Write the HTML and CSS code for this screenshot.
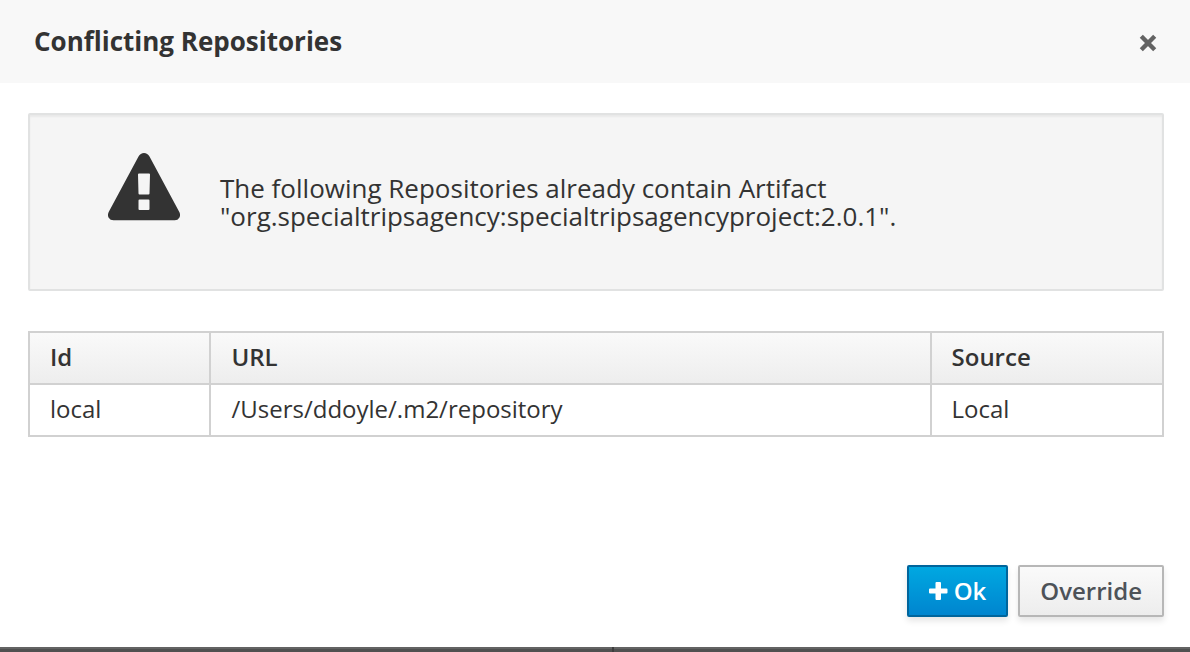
FILE: index.html
```html
<!DOCTYPE html>
<html lang="en">
<head>
<meta charset="utf-8">
<title>Conflicting Repositories</title>
<link rel="stylesheet" href="styles.css">
</head>
<body>
<section class="modal" role="dialog" aria-labelledby="modal-title">
  <header class="modal-header">
    <h1 class="modal-title" id="modal-title">Conflicting Repositories</h1>
    <button class="close" type="button" aria-label="Close">
      <svg class="close-icon" viewBox="0 0 18 18" aria-hidden="true"><path d="M2.300 3.300 15.700 16.700M15.700 3.300 2.300 16.700"/></svg>
    </button>
  </header>
  <main class="modal-body">
    <div class="well">
      <svg class="warning-icon" viewBox="0 0 72 68" aria-hidden="true">
        <path fill-rule="evenodd" d="M30.500 3.500Q32.500 0 36 0T41.500 3.500L71.300 59Q72.800 62 71.300 64.700T66.500 67.300H5.500Q2.200 67.300.7 64.700T.700 59ZM31 20.500Q30 20.500 30 21.500L30.500 40.500Q30.600 41.500 31.500 41.500H40.500Q41.500 41.500 41.500 40.500L42 21.500Q42 20.500 41 20.500ZM31.500 46.500Q30.500 46.500 30.500 47.500V56Q30.500 57 31.500 57H40.500Q41.500 57 41.500 56V47.500Q41.500 46.500 40.500 46.500Z"/>
      </svg>
      <p class="message">The following Repositories already contain Artifact<br>"org.specialtripsagency:specialtripsagencyproject:2.0.1".</p>
    </div>
    <table class="repositories">
      <colgroup><col class="col-id"><col class="col-url"><col class="col-source"></colgroup>
      <thead><tr><th scope="col">Id</th><th scope="col">URL</th><th scope="col">Source</th></tr></thead>
      <tbody><tr><td>local</td><td>/Users/ddoyle/.m2/repository</td><td>Local</td></tr></tbody>
    </table>
  </main>
  <footer class="modal-footer">
    <button class="btn btn-primary" type="button">
      <svg class="plus-icon" viewBox="0 0 19 18" aria-hidden="true"><path d="M7.500 0H11Q12 0 12 1V6.500H17.500Q18.500 6.500 18.500 7.500V10.500Q18.500 11.500 17.500 11.500H12V17Q12 18 11 18H7.500Q6.500 18 6.500 17V11.500H1Q0 11.500 0 10.500V7.500Q0 6.500 1 6.500H6.500V1Q6.500 0 7.500 0Z"/></svg>Ok</button>
    <button class="btn btn-default" type="button">Override</button>
  </footer>
</section>
<div class="page-behind"><span class="pane"></span><span class="pane"></span></div>
</body>
</html>
```
FILE: styles.css
```css
* {
  box-sizing: border-box;
}

body {
  margin: 0;
  min-height: 100vh;
  display: flex;
  flex-direction: column;
  background: #fff;
  color: #333;
  font-family: "Open Sans", "Noto Sans", sans-serif;
  font-size: 24px;
}

.modal {
  flex: 1;
  display: flex;
  flex-direction: column;
}

.modal-header {
  display: flex;
  align-items: center;
  justify-content: space-between;
  padding: 19px 33px 20px 34px;
  background: #f8f8f8;
}

.modal-title {
  margin: 0;
  font-size: 26px;
  line-height: 44px;
  font-weight: 700;
}

.close {
  display: flex;
  padding: 2px 0 0;
  border: 0;
  background: none;
}

.close-icon {
  width: 18px;
  height: 18px;
  overflow: visible;
  stroke: #636363;
  stroke-width: 4.4;
}

.modal-body {
  flex: 1;
  padding: 30px 26px 0 28px;
}

.well {
  display: flex;
  gap: 40px;
  padding: 38px 78px;
  min-height: 178px;
  margin-bottom: 40px;
  border: 2px solid #e1e2e2;
  border-radius: 2px;
  background: #f5f5f5;
  box-shadow: inset 0 2px 2px rgba(0, 0, 0, 0.05);
}

.warning-icon {
  flex: none;
  width: 72px;
  height: 68px;
  fill: #333;
}

.message {
  margin: 21px 0 0;
  font-size: 26px;
  line-height: 28px;
}

.repositories {
  width: 100%;
  table-layout: fixed;
  border-collapse: collapse;
  line-height: 40px;
}

.col-id {
  width: 16%;
}

.col-source {
  width: 20.5%;
}

.repositories th,
.repositories td {
  padding: 4px 20px 6px;
  border: 2px solid #d1d1d1;
  text-align: left;
}

.repositories th {
  font-weight: 600;
}

.repositories thead {
  background: linear-gradient(#fafafa, #ededed);
}

.modal-footer {
  display: flex;
  justify-content: flex-end;
  gap: 10px;
  padding: 30px 26px;
}

.btn {
  display: flex;
  align-items: center;
  gap: 6px;
  padding: 4px 20px;
  border: 2px solid;
  border-radius: 2px;
  font: 600 24px/40px "Open Sans", "Noto Sans", sans-serif;
  box-shadow: 0 4px 6px rgba(3, 3, 3, 0.1);
}

.btn-primary {
  border-color: #00659c;
  background: linear-gradient(#00a8e1, #0085cf);
  color: #fff;
}

.btn-default {
  border-color: #b7b7b7;
  background: linear-gradient(#fafafa, #ededed);
  color: #4d5258;
}

.plus-icon {
  width: 19px;
  height: 18px;
  fill: #fff;
}

.page-behind {
  display: flex;
  gap: 2px;
  height: 5px;
  background: #3d3d3d;
}

.pane {
  flex: 48.5;
  border-top: 2px solid #636363;
  background: #505050;
}

.pane:first-child {
  flex: 51.5;
}
```
